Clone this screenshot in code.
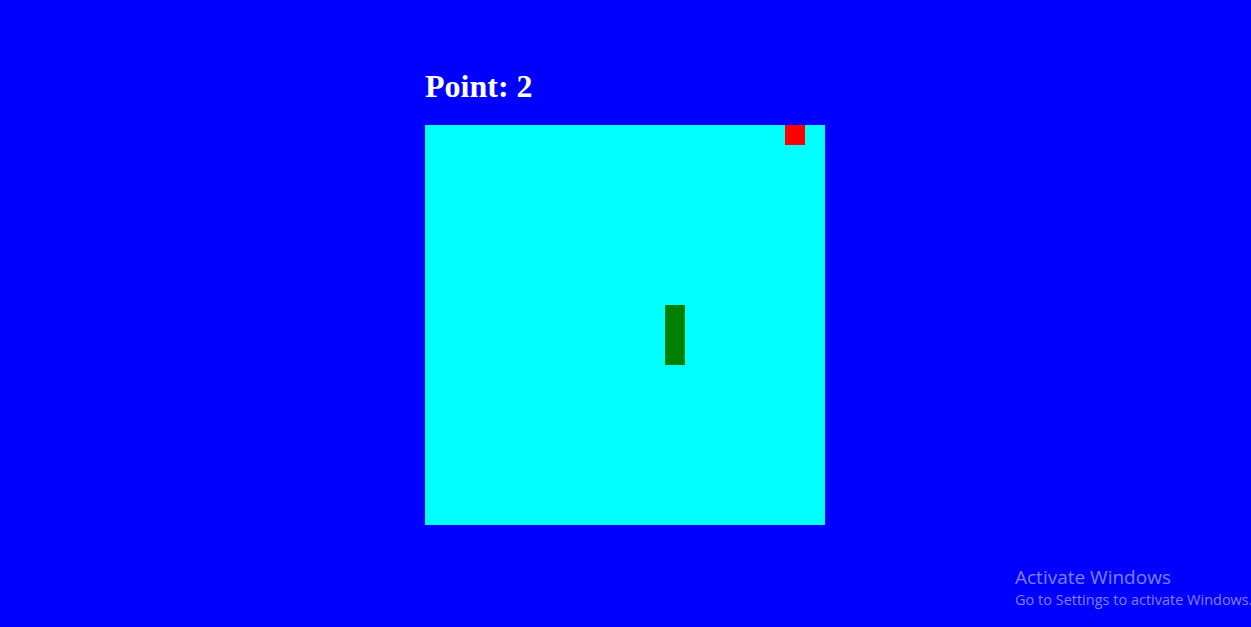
export default function App() {
  const snake = [
    [12, 9],
    [12, 10],
    [12, 11],
  ];
  const food = [18, 0];

  return (
    <main className="relative min-h-screen w-full overflow-hidden bg-[#0000ff]">
      <div className="ml-[425px] w-[400px] pt-[68px]">
        <h1 className="font-['Liberation_Serif',serif] text-[32px] font-bold leading-[36px] text-white">
          Point: 2
        </h1>
        <div className="relative mt-[21px] h-[400px] w-[400px] bg-[#00ffff]">
          {snake.map(([x, y], i) => (
            <div
              key={i}
              className="absolute h-[20px] w-[20px] bg-[#008000]"
              style={{ left: x * 20, top: y * 20 }}
            />
          ))}
          <div
            className="absolute h-[20px] w-[20px] bg-[#ff0000]"
            style={{ left: food[0] * 20, top: food[1] * 20 }}
          />
        </div>
      </div>

      <div className="absolute left-[1015px] top-[564px] whitespace-nowrap font-['Open_Sans',sans-serif] text-white/50">
        <div className="text-[19px] leading-[26px]">Activate Windows</div>
        <div className="text-[14.5px] leading-[20px]">Go to Settings to activate Windows.</div>
      </div>
    </main>
  );
}
